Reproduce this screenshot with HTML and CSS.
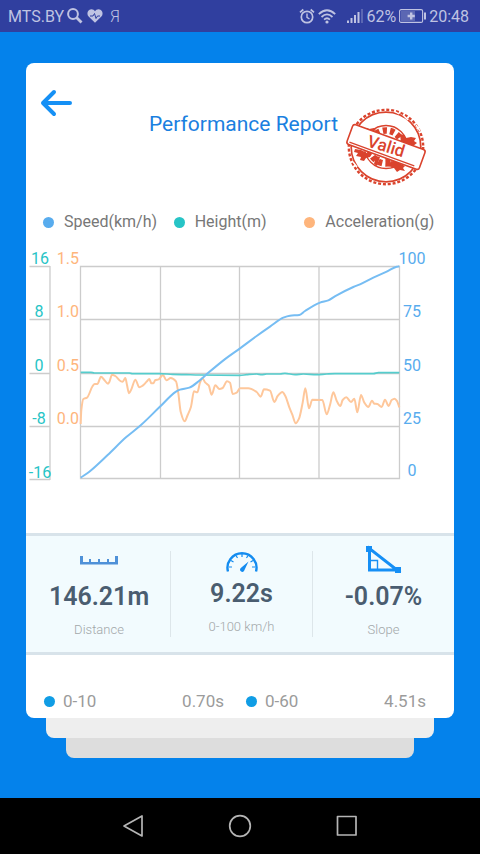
FILE: index.html
```html
<!DOCTYPE html>
<html lang="en">
<head>
<meta charset="utf-8">
<meta name="viewport" content="width=device-width, initial-scale=1">
<title>Performance Report</title>
<link rel="stylesheet" href="styles.css">
</head>
<body>
<div class="status">
  <div class="status-side">
    <span>MTS.BY</span>
    <svg width="16" height="16" viewBox="0 0 16 16" fill="none" stroke="currentColor"><circle cx="6" cy="6" r="4.9" stroke-width="2"/><path d="M9.500 9.500L14.500 14.500" stroke-width="2.800"/></svg>
    <svg class="heart" width="16" height="14" viewBox="0 0 16 14"><path fill="currentColor" d="M8 13.800L1.600 7.600C-.6 5.200.3.600 4.200.3 5.900.2 7.200 1 8 2.200 8.800 1 10.100.2 11.800.3c3.900.3 4.800 4.900 2.600 7.300z"/><path d="M3 7h3l1.500-2.500L9 9.500l1.500-2.500H13" fill="none" stroke="#303f9f"/></svg>
    <span class="light">Я</span>
  </div>
  <div class="status-side">
    <svg width="16" height="16" viewBox="0 0 16 16" fill="none" stroke="currentColor"><circle cx="8" cy="9" r="5.700" stroke-width="1.700"/><path d="M8 5.500V9.300l2.500 1.700" stroke-width="1.400"/><path d="M1 4.300L4.300 1.500M15 4.300L11.700 1.500" stroke-width="1.700"/></svg>
    <svg width="18" height="15" viewBox="0 0 18 15" fill="none" stroke="currentColor" stroke-width="1.800"><path d="M.8 5.200Q9-2.600 17.200 5.200M3.500 8Q9 2.800 14.500 8M6.100 10.600Q9 8 11.900 10.600"/><circle cx="9" cy="13" r="1.600" fill="currentColor" stroke="none"/></svg>
    <svg class="signal" width="16" height="14" viewBox="0 0 16 14" fill="currentColor"><path d="M0 11.500h2V14H0zM3.500 9h2v5h-2zM7 6h2v8H7zM10.500 3h2v11h-2z"/><path d="M14 0h2v14h-2z" opacity=".3"/></svg>
    <span>62%</span>
    <svg width="27" height="14" viewBox="0 0 27 14"><rect x=".6" y=".6" width="23" height="12.800" rx="1.500" fill="none" stroke="currentColor" stroke-width="1.100"/><path d="M2 2h14v10H2z" fill="currentColor" opacity=".3"/><path d="M25 3.500h2v7h-2zM11 3.500h2.400v2.300h2.400v2.400h-2.400v2.300H11V8.200H8.600V5.800H11z" fill="currentColor"/></svg>
    <span>20:48</span>
  </div>
</div>

<main class="page">
  <article class="card">
    <header class="head">
      <button class="back" type="button" aria-label="Back"><svg width="33" height="28" viewBox="0 0 33 28" fill="none" stroke="#1590f5" stroke-width="4" stroke-linecap="round" stroke-linejoin="round"><path d="M30 14H3M14 3L3 14l11 11"/></svg></button>
      <h1>Performance Report</h1>
      <svg class="stamp" width="82" height="80" viewBox="-41 -40 82 80" role="img" aria-label="Valid">
        <g fill="none" stroke="#da432d">
          <circle r="37.200" stroke-width="2.400" stroke-dasharray="3 1.870"/>
          <circle r="34.800" stroke-width="1.700"/>
          <circle r="21.500" stroke-width="1.300"/>
          <circle r="16.500" stroke-width="6.500" stroke-dasharray="4.200 3.200"/>
        </g>
        <g fill="#da432d">
          <path d="M-22-17l3-2 2 1 5-1 2 2-4 2 3 5-8-3-4-1zM14-13l4 1 2 3 5-1 5 1-2 3 3 2-4 3 2 3-8-2-6-4zM-31 2l6 1 6 3 5 1-2 3-4 1-2 3-4-1 1-3-5-1 2-3-4-1zM5 14l8 2 6 3-2 2 2 3-5-1-3 2-3-4-4-2z"/>
          <path d="M-1 11l5 1 2 8-5-1zM-10 9l4 1-3 9-3-2z"/>
        </g>
        <path d="M8-36l5 3M17-32l5 5M30-22l4 6M-33 15l4 5" stroke="#fff" stroke-width="1.400"/>
        <g transform="rotate(20)">
          <rect x="-38.500" y="-10.500" width="77" height="21" rx="2.500" fill="#fff" stroke="#da432d" stroke-width="1.600"/>
          <path d="M-36 8h69" stroke="#da432d" stroke-width="1.300"/>
        </g>
        <text class="stamp-text" transform="rotate(17)" x="0" y="5" text-anchor="middle">Valid</text>
      </svg>
    </header>

    <ul class="legend">
      <li class="speed">Speed(km/h)</li>
      <li class="height">Height(m)</li>
      <li class="accel">Acceleration(g)</li>
    </ul>

    <svg class="chart" viewBox="26 245 428 240" role="img" aria-label="Speed, height and acceleration">
      <g class="grid">
        <path d="M80.500 266.500H399.500V478.500H80.500zM80.500 319.500H399.500M80.500 373.500H399.500M80.500 426.500H399.500M160.500 266.500V478.500M239.500 266.500V478.500M319 266.500V478.500"/>
        <path d="M50 266V480M29.500 266.500H50M29.500 319.500H50M29.500 373.500H50M29.500 426.500H50M29.500 479.500H50"/>
      </g>
      <g id="lines" class="lines" transform="translate(26 350) scale(.33333)"></g>
      <g class="t-height" text-anchor="middle">
        <text x="40" y="264">16</text><text x="39" y="317">8</text><text x="39" y="371">0</text><text x="39" y="424">-8</text><text x="40" y="478">-16</text>
      </g>
      <g class="t-accel" text-anchor="end">
        <text x="79" y="264">1.5</text><text x="79" y="317">1.0</text><text x="79" y="371">0.5</text><text x="79" y="424">0.0</text>
      </g>
      <g class="t-speed" text-anchor="middle">
        <text x="412" y="264">100</text><text x="412" y="317">75</text><text x="412" y="371">50</text><text x="412" y="424">25</text><text x="412" y="476">0</text>
      </g>
    </svg>

    <section class="stats">
      <div class="stat">
        <svg width="38" height="22" viewBox="0 0 38 22"><path d="M0 5h3v6h6V8h2v3h7V8h2v3h7V8h2v3h6V5h3v8.500H0z" fill="#4f91d8"/></svg>
        <strong>146.21m</strong><span>Distance</span>
      </div>
      <div class="stat raised">
        <svg width="32" height="22" viewBox="0 0 32 22" fill="none" stroke="#148cf0"><path d="M2 20.500A14.500 14.500 0 1 1 30 20.500" stroke-width="2.400"/><path d="M3 16h3M5 9.500l2.500 1.500M10 4.500l1.500 2.500M16 3v3M22 4.500l-1.500 2.500M27 9.500l-2.500 1.500M29 16h-3" stroke-width="1.200"/><path d="M22.500 10.500l-4.500 9.500a2.200 2.200 0 1 1-3.500-2.800z" fill="#148cf0" stroke="none"/></svg>
        <strong>9.22s</strong><span>0-100 km/h</span>
      </div>
      <div class="stat">
        <svg class="slope" width="36" height="28" viewBox="0 0 36 28" fill="none" stroke="#168ff5"><path d="M3.500 3.500V25H31z" stroke-width="3"/><path d="M4 15.500H11.500V24" stroke-width="1.400"/><path d="M0 1h6v6H0zM29 22h6v6h-6z" fill="#168ff5" stroke="none"/></svg>
        <strong>-0.07%</strong><span>Slope</span>
      </div>
    </section>

    <section class="results">
      <div class="result"><span>0-10</span><span>0.70s</span></div>
      <div class="result"><span>0-60</span><span>4.51s</span></div>
    </section>
  </article>
  <div class="sheet"></div>
  <div class="sheet last"></div>
</main>

<nav class="nav">
  <button type="button" aria-label="Back"><svg width="24" height="24" viewBox="0 0 24 24"><path d="M21 2V22L3 12z"/></svg></button>
  <button type="button" aria-label="Home"><svg width="24" height="24" viewBox="0 0 24 24"><circle cx="12" cy="12" r="10.300"/></svg></button>
  <button type="button" aria-label="Recent apps"><svg width="24" height="24" viewBox="0 0 24 24"><rect x="2.500" y="2.500" width="18.500" height="18.500"/></svg></button>
</nav>
<script src="chart.js"></script>
</body>
</html>
```
FILE: styles.css
```css
* { box-sizing: border-box; }
body {
  margin: 0;
  min-height: 100vh;
  display: flex;
  flex-direction: column;
  background: #0482eb;
  font-family: Roboto, "Liberation Sans", sans-serif;
}
button { border: 0; padding: 0; background: none; }
svg { display: block; flex: none; }

.status {
  height: 32px;
  padding: 0 11px 0 8px;
  display: flex;
  justify-content: space-between;
  background: #303f9f;
  color: #bfc3e2;
  font-size: 16px;
}
.status-side { display: flex; align-items: center; gap: 3px; }
.heart { margin: 0 4px 0 1px; }
.signal { margin-left: 8px; }
.light { font-weight: 300; }

.page { flex: 1; padding: 31px 26px 40px; }
.card {
  background: #fff;
  border-radius: 8px;
  overflow: hidden;
}
.head {
  display: grid;
  grid-template-columns: auto 1fr auto;
  gap: 7px;
  padding: 26px 27px 0 14px;
}
.back { align-self: start; }
h1 {
  margin: 21px 0 0;
  font-size: 21px;
  line-height: 28px;
  font-weight: 400;
  text-align: right;
  color: #1a80e0;
}
.stamp { margin-top: 18px; }
.stamp-text { font: 500 17px Roboto, sans-serif; fill: #da432d; }

.legend {
  list-style: none;
  display: grid;
  grid-template-columns: repeat(3, 1fr);
  margin: 25px 19px 0 17px;
  padding: 0;
  font-size: 16px;
  line-height: 20px;
  color: #777;
}
.legend li { display: flex; align-items: center; gap: 10px; white-space: nowrap; }
.legend li::before {
  content: "";
  width: 11px;
  height: 11px;
  flex: none;
  border-radius: 50%;
  background: currentColor;
}
.legend .speed::before { background: #58acee; }
.legend .height::before { background: #27c4c6; }
.legend .accel::before { background: #feb57c; }

.chart { width: 100%; margin-top: 13px; font-size: 16px; }
.grid path { fill: none; stroke: #ccc; stroke-width: 1.3; }
.lines path { fill: none; stroke-width: 6; stroke-linejoin: round; }
.lines .l-height { stroke: #55cdcd; stroke-width: 5; }
.l-speed { stroke: #76bdf3; }
.l-accel { stroke: #fec79b; }
.t-height { fill: #27c4c6; }
.t-accel { fill: #feb57c; }
.t-speed { fill: #58acee; }

.stats {
  display: grid;
  grid-template-columns: repeat(3, 1fr);
  margin-top: 48px;
  padding: 15px 0 15px 2px;
  border: solid #d8e3ea;
  border-width: 3px 0;
  background: #f2fbfe;
}
.stat {
  height: 86px;
  display: flex;
  flex-direction: column;
  align-items: center;
}
.stat + .stat { border-left: 1px solid #dde6ea; }
.stat strong {
  margin-top: 9px;
  font-size: 25px;
  line-height: 30px;
  font-weight: 600;
  color: #4a5d70;
}
.stat span {
  margin-top: 10px;
  font-size: 13px;
  line-height: 16px;
  color: #a2a7a9;
  font-weight: 300;
}
.raised strong { margin-top: 6px; }
.slope { margin-top: -6px; }

.results {
  display: grid;
  grid-template-columns: 1fr 1fr;
  gap: 22px;
  padding: 36px 28px 7px 18px;
}
.result {
  display: flex;
  align-items: center;
  font-size: 17px;
  line-height: 20px;
  color: #9b9b9b;
}
.result::before {
  content: "";
  width: 11px;
  height: 11px;
  margin-right: 8px;
  border-radius: 50%;
  background: #109de5;
}
.result span:last-child { margin-left: auto; }

.sheet {
  height: 20px;
  margin: 0 20px;
  border-radius: 0 0 8px 8px;
  background: #eee;
}
.sheet.last { margin: 0 40px; background: #ddd; }

.nav {
  height: 56px;
  display: flex;
  justify-content: center;
  align-items: center;
  gap: 83px;
  background: #000;
}
.nav svg { fill: none; stroke: #b5b5b5; stroke-width: 1.7; stroke-linejoin: round; }
```
FILE: chart.js
```js
const series = {
  "l-accel": "164,222 166,180 172,147 183,143 200,108 206,102 214,102 225,80 235,90 246,101 250,96 258,74 268,78 285,94 290,95 298,84 303,105 309,130 316,118 328,89 340,112 350,107 362,95 370,87 376,100 382,100 388,90 398,88 411,75 421,91 434,84 450,94 457,130 464,185 476,214 485,195 495,170 504,124 514,127 522,98 529,85 538,98 548,106 557,134 568,106 580,117 590,114 603,94 612,98 620,132 632,128 642,115 667,115 692,126 704,140 714,118 732,122 745,156 755,138 769,126 778,138 790,172 799,194 809,220 819,206 830,158 838,115 849,175 859,149 889,150 902,193 912,165 922,127 932,152 943,168 950,150 961,142 975,156 985,146 994,187 1005,135 1015,158 1027,171 1038,152 1045,161 1054,162 1067,171 1077,149 1088,168 1097,150 1106,146 1113,153 1120,172",
  "l-height": "164,67 195,67 205,69 310,69 320,71 400,71 440,73 480,74 520,75 642,76 662,74 692,72 707,74 722,72 762,72 777,70 807,74 832,72 872,74 902,72 927,71 1042,71 1057,68 1120,68",
  "l-speed": "164,383 190,365 245,315 300,262 345,225 400,172 450,125 462,119 490,113 520,92 545,70 600,25 642,-5 692,-42 732,-70 772,-97 792,-103 820,-105 837,-117 882,-142 907,-149 932,-164 982,-189 1002,-197 1042,-217 1082,-235 1112,-250 1120,-251"
};

// Joins the points with cubic segments that never overshoot a peak.
function smooth(points) {
  let d = "M" + points[0];
  for (let i = 0; i < points.length - 1; i++) {
    const a = points[i - 1] || points[i];
    const b = points[i];
    const c = points[i + 1];
    const e = points[i + 2] || c;
    const h = (c[0] - b[0]) / 3;
    const s1 = slope(a, b, c);
    const s2 = slope(b, c, e);
    d += `C${b[0] + h},${b[1] + s1 * h} ${c[0] - h},${c[1] - s2 * h} ${c}`;
  }
  return d;
}

function slope(a, b, c) {
  const m1 = (b[1] - a[1]) / (b[0] - a[0]);
  const m2 = (c[1] - b[1]) / (c[0] - b[0]);
  if (!isFinite(m1)) return m2 || 0;
  if (!isFinite(m2)) return m1;
  return m1 * m2 <= 0 ? 0 : 2 * m1 * m2 / (m1 + m2);
}

const lines = document.getElementById("lines");
for (const [name, text] of Object.entries(series)) {
  const path = document.createElementNS("http://www.w3.org/2000/svg", "path");
  path.setAttribute("class", name);
  path.setAttribute("d", smooth(text.split(" ").map(p => p.split(",").map(Number))));
  lines.appendChild(path);
}
```
